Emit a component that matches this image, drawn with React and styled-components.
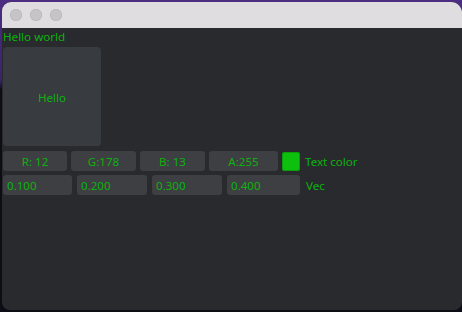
import styled, { createGlobalStyle } from "styled-components";

const Global = createGlobalStyle`
  html, body {
    margin: 0;
    padding: 0;
    background: #0e0c14;
  }
  body {
    width: 462px;
    height: 312px;
    overflow: hidden;
    background: linear-gradient(180deg, #4b2d82 0px, #3a2468 80px, #0e0c14 90px);
  }
`;

const Window = styled.div`
  margin: 2px 0 0 2px;
  width: 460px;
  height: 308px;
  border-radius: 9px 11px 8px 8px;
  overflow: hidden;
  background: #282a2d;
  display: flex;
  flex-direction: column;
  font-family: "Noto Sans", "Open Sans", sans-serif;
  font-size: 11.6px;
  color: #0cb20d;
`;

const TitleBar = styled.div`
  height: 26px;
  flex-shrink: 0;
  background: #dfdddf;
  display: flex;
  align-items: center;
  gap: 8px;
  padding-left: 8px;
`;

const Light = styled.span`
  width: 12px;
  height: 12px;
  border-radius: 50%;
  background: #c6c4c6;
  box-shadow: inset 0 0 0 0.5px #b4b2b4;
`;

const Content = styled.div`
  padding: 1px 0 0 1px;
  display: flex;
  flex-direction: column;
`;

const Label = styled.div`
  height: 16px;
  line-height: 16px;
  margin-bottom: 2px;
`;

const Panel = styled.div`
  width: 98px;
  height: 99px;
  border-radius: 4px;
  background: #383b40;
  display: flex;
  align-items: center;
  justify-content: center;
  padding-top: 2px;
  box-sizing: border-box;
  margin-bottom: 5px;
`;

const Row = styled.div`
  display: flex;
  align-items: center;
  gap: ${(p) => p.$gap}px;
  height: 20px;
  margin-bottom: 4px;
`;

const Field = styled.div`
  width: ${(p) => p.$w}px;
  height: 20px;
  box-sizing: border-box;
  border-radius: 3px;
  background: #3d3f43;
  display: flex;
  align-items: center;
  justify-content: ${(p) => (p.$left ? "flex-start" : "center")};
  padding-left: ${(p) => (p.$left ? 4 : 0)}px;
`;

const Swatch = styled.div`
  width: 18px;
  height: 19px;
  border-radius: 3px;
  background: #0cc00d;
  box-shadow: inset 0 0 0 1px #0aa00b;
`;

const Caption = styled.span`
  margin-left: 1px;
`;

export default function App() {
  return (
    <>
      <Global />
      <Window>
        <TitleBar>
          <Light />
          <Light />
          <Light />
        </TitleBar>
        <Content>
          <Label>Hello world</Label>
          <Panel>Hello</Panel>
          <Row $gap={4}>
            <Field $w={64}>R: 12</Field>
            <Field $w={65}>G:178</Field>
            <Field $w={65}>B: 13</Field>
            <Field $w={69}>A:255</Field>
            <Swatch />
            <Caption>Text color</Caption>
          </Row>
          <Row $gap={5}>
            <Field $w={69} $left>0.100</Field>
            <Field $w={70} $left>0.200</Field>
            <Field $w={70} $left>0.300</Field>
            <Field $w={73} $left>0.400</Field>
            <Caption>Vec</Caption>
          </Row>
        </Content>
      </Window>
    </>
  );
}
